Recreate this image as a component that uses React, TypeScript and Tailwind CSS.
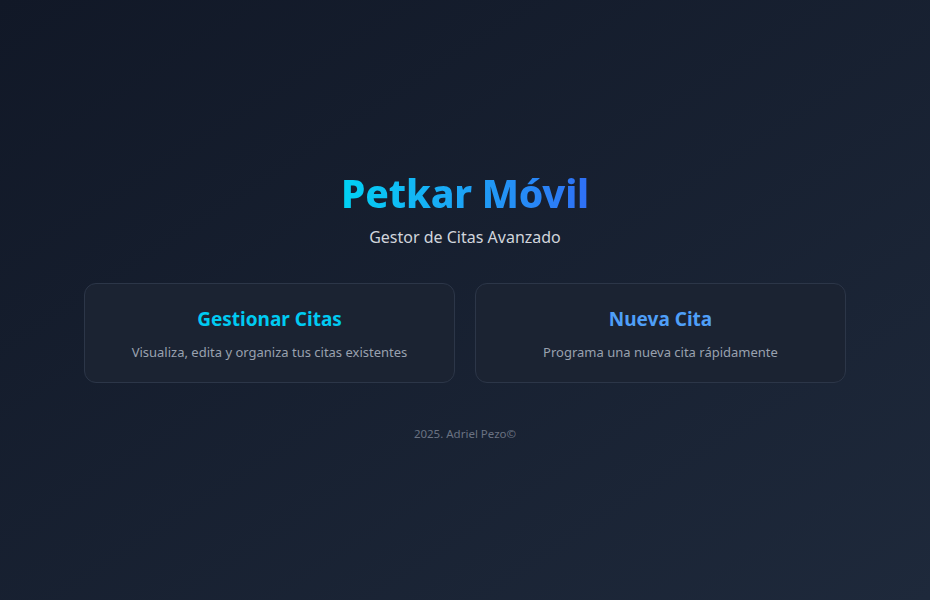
import React from "react";

export default function App() {
  return (
    <div
      className="min-h-screen w-full flex flex-col items-center justify-center bg-gradient-to-br from-[#111827] to-[#1e293b] text-gray-300 pt-3"
      style={{ fontFamily: '"Noto Sans", "Open Sans", sans-serif' }}
    >
      <div className="flex flex-col items-center">
        <h1 className="text-[39px] font-extrabold bg-gradient-to-r from-[#00d2f3] to-[#2f6ff5] bg-clip-text text-transparent leading-[48px] tracking-[-0.2px]">
          Petkar Móvil
        </h1>
        <p className="mt-2 text-base text-gray-300">Gestor de Citas Avanzado</p>
      </div>
      <div className="mt-[34px] grid grid-cols-2 gap-5 w-[762px]">
        <div className="h-[100px] rounded-xl border border-[#2c3648] bg-[#1b2332] flex flex-col items-center justify-center">
          <h2 className="text-[19px] font-bold text-[#00cbf2] translate-y-[1px]">Gestionar Citas</h2>
          <p className="mt-2.5 text-[13px] text-gray-400">Visualiza, edita y organiza tus citas existentes</p>
        </div>
        <div className="h-[100px] rounded-xl border border-[#2c3648] bg-[#1b2332] flex flex-col items-center justify-center">
          <h2 className="text-[19px] font-bold text-[#4f9ff8] translate-y-[1px]">Nueva Cita</h2>
          <p className="mt-2.5 text-[13px] text-gray-400">Programa una nueva cita rápidamente</p>
        </div>
      </div>
      <p className="mt-[42px] text-[11.5px] text-gray-500">2025. Adriel Pezo©</p>
    </div>
  );
}
